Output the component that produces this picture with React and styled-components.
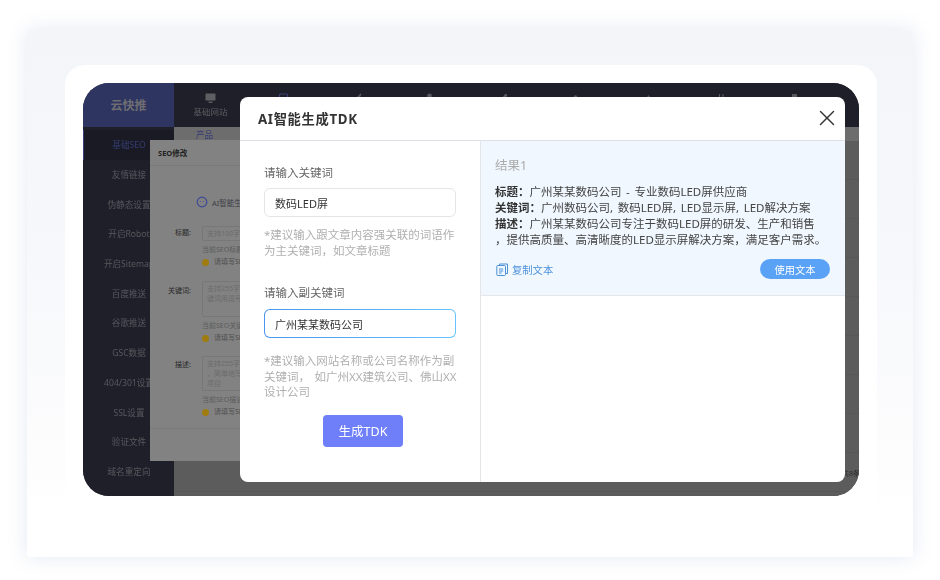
import React from "react";
import styled, { createGlobalStyle } from "styled-components";
import { X } from "lucide-react";

const FONT = `"Noto Sans", "Noto Sans CJK SC", sans-serif`;

const Global = createGlobalStyle`
  html, body { margin: 0; padding: 0; background: #fff; }
  * { box-sizing: border-box; }
  body { font-family: ${FONT}; width: 940px; height: 580px; overflow: hidden; }
`;

const Page = styled.div`
  width: 940px;
  height: 580px;
  padding: 30px 27px 23px;
`;
const OuterCard = styled.div`
  height: 527px;
  padding: 35px 36px 0 38px;
  border-radius: 4px;
  background: linear-gradient(180deg, #f3f5f9 0%, #f7f8fb 45%, #fcfcfd 78%, #fff 92%);
  box-shadow: 0 0 20px rgba(198, 205, 230, 0.45);
`;
const InnerCard = styled.div`
  height: 470px;
  padding: 18px;
  border-radius: 20px;
  background: #fff;
`;
const Screen = styled.div`
  position: relative;
  width: 776px;
  height: 413px;
`;
const Backdrop = styled.div`
  position: relative;
  display: grid;
  grid-template-columns: 91px 1fr;
  grid-template-rows: 44px 1fr;
  width: 100%;
  height: 100%;
  border-radius: 26px;
  overflow: hidden;
  background: #1e1f29;
  filter: blur(0.4px);
`;
const Logo = styled.div`
  display: flex;
  align-items: center;
  justify-content: center;
  background: #2f3561;
  color: #6d6d72;
  font-size: 12px;
  font-weight: 700;
`;
const TopNav = styled.div`
  display: flex;
  background: #1e1f29;
`;
const NavItem = styled.div`
  width: 73px;
  display: flex;
  flex-direction: column;
  align-items: center;
  padding-top: 10px;
  gap: 1px;
  color: #5a5a5f;
  font-size: 8.5px;
  line-height: 13px;
  white-space: nowrap;
`;
const Side = styled.div`
  display: flex;
  flex-direction: column;
  padding-top: 3px;
  background: #1e1f29;
`;
const SideItem = styled.div`
  height: 29.7px;
  display: flex;
  align-items: center;
  justify-content: center;
  white-space: nowrap;
  font-size: 8.6px;
  color: ${(p) => (p.$active ? "#353d74" : "#58585d")};
  background: ${(p) => (p.$active ? "#191a23" : "transparent")};
  border-left: 1px solid ${(p) => (p.$active ? "#39427c" : "transparent")};
`;
const Main = styled.div`
  display: flex;
  flex-direction: column;
  background: #5b5b5b;
`;
const Tabs = styled.div`
  height: 14px;
  padding-left: 22px;
  background: #6d6d6d;
  color: #353d74;
  font-size: 8.6px;
  line-height: 17px;
`;
const Rows = styled.div`
  flex: 1;
  background: repeating-linear-gradient(180deg, #5c5c5c 0 38px, #575757 38px 39px);
`;
const PagerNote = styled.div`
  position: absolute;
  right: -1px;
  bottom: 18px;
  color: #2c2c2c;
  font-size: 7px;
`;
const SeoDialog = styled.div`
  position: absolute;
  left: 67px;
  top: 57px;
  width: 500px;
  height: 321px;
  background: #828282;
  display: flex;
  flex-direction: column;
`;
const SeoHead = styled.div`
  height: 26px;
  padding: 0 8px;
  display: flex;
  align-items: center;
  border-bottom: 1px solid #7a7a7a;
  color: #1f1f1f;
  font-size: 7.5px;
  font-weight: 700;
`;
const SeoBody = styled.div`
  flex: 1;
  padding: 30px 0 0 46px;
`;
const AiLine = styled.div`
  display: flex;
  align-items: center;
  gap: 4px;
  height: 12px;
  margin-bottom: 18px;
  color: #3c3c46;
  font-size: 7.5px;
  white-space: nowrap;
`;
const Field = styled.div`
  display: grid;
  grid-template-columns: 35px 1fr;
  column-gap: 11px;
  align-items: start;
  margin-bottom: ${(p) => p.$gap}px;
  margin-left: -40px;
`;
const FieldLabel = styled.div`
  font-size: 7px;
  line-height: 14px;
  color: #262626;
  text-align: right;
  padding-top: ${(p) => p.$top}px;
`;
const FieldBox = styled.div`
  width: 150px;
  height: ${(p) => p.$h}px;
  padding: 2px 4px;
  border: 1px solid #777;
  border-radius: 2px;
  color: #6c6c6c;
  font-size: 7px;
  line-height: 10px;
  overflow: hidden;
`;
const Current = styled.div`
  margin-top: 3px;
  color: #5b5b5b;
  font-size: 7px;
  line-height: 12px;
  white-space: nowrap;
`;
const Warn = styled.div`
  display: flex;
  align-items: center;
  gap: 5px;
  color: #4e4e4e;
  font-size: 7px;
  line-height: 12px;
  white-space: nowrap;
`;
const Dot = styled.span`
  width: 7px;
  height: 7px;
  border-radius: 50%;
  background: #a07c10;
`;
const SeoFoot = styled.div`
  height: 33px;
  border-top: 1px solid #7a7a7a;
`;

const Dialog = styled.div`
  position: absolute;
  left: 157px;
  top: 14px;
  width: 605px;
  height: 385px;
  display: flex;
  flex-direction: column;
  background: #fff;
  border-radius: 8px;
  overflow: hidden;
`;
const DialogHead = styled.div`
  height: 44px;
  flex: none;
  display: flex;
  align-items: center;
  justify-content: space-between;
  padding: 0 5px 0 18px;
  border-bottom: 1px solid #dcdfe4;
`;
const DialogTitle = styled.div`
  color: #333;
  font-size: 13.3px;
  font-weight: 700;
  letter-spacing: 0.65px;
`;
const DialogBody = styled.div`
  flex: 1;
  display: grid;
  grid-template-columns: 241px 1fr;
  min-height: 0;
`;
const FormCol = styled.div`
  display: flex;
  flex-direction: column;
  padding: 24px 16px 0 24px;
  border-right: 1px solid #e3e5e9;
`;
const Label = styled.div`
  color: #666;
  font-size: 11.5px;
  line-height: 16px;
  margin-bottom: ${(p) => p.$gap}px;
`;
const Input = styled.div`
  width: 192px;
  height: 29px;
  flex: none;
  display: flex;
  align-items: center;
  padding-left: 10px;
  border-radius: 6px;
  color: #333;
  font-size: 11px;
  border: 1px solid ${(p) => (p.$focus ? "transparent" : "#e3e5e9")};
  background: ${(p) =>
    p.$focus
      ? "linear-gradient(#fff, #fff) padding-box, linear-gradient(90deg, #4a95ee, #66c3ff) border-box"
      : "#fff"};
`;
const Hint = styled.div`
  color: #b0b0b0;
  font-size: 11.5px;
  line-height: 15.5px;
  word-spacing: 1.6px;
  margin-top: ${(p) => p.$top}px;
  margin-bottom: ${(p) => p.$gap}px;
`;
const Generate = styled.div`
  width: 80px;
  height: 32px;
  flex: none;
  align-self: center;
  margin-left: -2px;
  display: flex;
  align-items: center;
  justify-content: center;
  border-radius: 4px;
  background: #6e7ff9;
  color: #fff;
  font-size: 12.5px;
`;
const ResultCol = styled.div`
  display: flex;
  flex-direction: column;
`;
const Result = styled.div`
  height: 155px;
  padding: 16px 15px 0 14px;
  background: #f0f7fe;
  border-bottom: 1px solid #e5e7ea;
  display: flex;
  flex-direction: column;
`;
const ResultHead = styled.div`
  color: #aaa;
  font-size: 12.5px;
  line-height: 18px;
  margin-bottom: 9px;
`;
const ResultText = styled.div`
  color: #444;
  font-size: 11.5px;
  line-height: 16px;
  word-spacing: 1.6px;
  white-space: nowrap;
  b { font-weight: 700; color: #333; }
`;
const ResultFoot = styled.div`
  margin-top: 11px;
  display: flex;
  align-items: center;
  justify-content: space-between;
`;
const Copy = styled.div`
  display: flex;
  align-items: center;
  gap: 4px;
  padding-left: 1px;
  color: #4a90d9;
  font-size: 10.3px;
`;
const UseBtn = styled.div`
  width: 70px;
  height: 20px;
  display: flex;
  align-items: center;
  justify-content: center;
  border-radius: 10px;
  background: #5aa2f5;
  color: #fff;
  font-size: 10.3px;
`;
const Close = styled.div`
  display: flex;
  margin-bottom: 2px;
  color: #333;
`;

const Monitor = () => (
  <svg width="11" height="11" viewBox="0 0 11 11">
    <rect x="0.5" y="0.5" width="10" height="7" rx="0.6" fill="#5e5e63" />
    <rect x="3.5" y="8.5" width="4" height="1.4" fill="#5e5e63" />
  </svg>
);
const Peek = ({ kind }) => (
  <svg width="11" height="11" viewBox="0 0 11 11" fill="none" stroke="#3a4272" strokeWidth="1.2">
    {kind === "page" && <rect x="1.5" y="1" width="8" height="9" rx="1" />}
    {kind === "send" && <path d="M10 1 6 5 8 5Z" fill="#56565c" stroke="#56565c" />}
    {kind === "user" && <circle cx="5.5" cy="3" r="2.4" fill="#56565c" stroke="none" />}
    {kind === "tag" && <path d="M5 5 8 1h2v2L7 6Z" fill="#56565c" stroke="none" />}
    {kind === "dot" && <circle cx="5.5" cy="4" r="1.8" fill="#56565c" stroke="none" />}
    {kind === "tip" && <path d="M5.5 2 7.5 5h-4Z" fill="#56565c" stroke="none" />}
    {kind === "bars" && <path d="M3.5 1v4M7 1v4" stroke="#56565c" />}
    {kind === "box" && <rect x="3" y="1" width="5" height="4" fill="#56565c" stroke="none" />}
  </svg>
);
const AiIcon = () => (
  <svg width="12" height="12" viewBox="0 0 12 12" fill="none">
    <circle cx="6" cy="6" r="4.8" stroke="#3c4a96" strokeWidth="1.2" />
    <circle cx="4.4" cy="5.4" r="0.5" fill="#3c4a96" />
    <circle cx="7.6" cy="5.4" r="0.5" fill="#3c4a96" />
  </svg>
);
const CopyIcon = () => (
  <svg width="12" height="13" viewBox="0 0 12 13" fill="none" stroke="#4a90d9" strokeWidth="1">
    <path d="M3.5 2.5V1h8v9.5H9.5" />
    <rect x="0.8" y="2.5" width="8.7" height="10" rx="1" />
    <path d="M3 6h4.2M3 8h4.2M3 10h2.6" />
  </svg>
);

const SIDE = ["基础SEO", "友情链接", "伪静态设置", "开启Robot", "开启Sitemap", "百度推送", "谷歌推送", "GSC数据", "404/301设置", "SSL设置", "验证文件", "域名重定向"];
const PEEKS = ["page", "send", "user", "tag", "dot", "tip", "bars", "box"];

export default function App() {
  return (
    <Page>
      <Global />
      <OuterCard>
        <InnerCard>
          <Screen>
            <Backdrop>
              <Logo>云快推</Logo>
              <TopNav>
                <NavItem><Monitor />基础网站</NavItem>
                {PEEKS.map((k) => (
                  <NavItem key={k}><Peek kind={k} /></NavItem>
                ))}
              </TopNav>
              <Side>
                {SIDE.map((s, i) => (
                  <SideItem key={s} $active={i === 0}>{s}</SideItem>
                ))}
              </Side>
              <Main>
                <Tabs>产品</Tabs>
                <Rows />
              </Main>
              <PagerNote>共8条</PagerNote>
              <SeoDialog>
                <SeoHead>SEO修改</SeoHead>
                <SeoBody>
                  <AiLine><AiIcon />AI智能生成</AiLine>
                  <Field $gap={13}>
                    <FieldLabel $top={0}>标题:</FieldLabel>
                    <div>
                      <FieldBox $h={15}>支持100字，</FieldBox>
                      <Current>当前SEO标题</Current>
                      <Warn><Dot />请填写SEO</Warn>
                    </div>
                  </Field>
                  <Field $gap={12}>
                    <FieldLabel $top={3}>关键词:</FieldLabel>
                    <div>
                      <FieldBox $h={36}>支持255字，<br />键词用逗号</FieldBox>
                      <Current>当前SEO关键</Current>
                      <Warn><Dot />请填写SEO</Warn>
                    </div>
                  </Field>
                  <Field $gap={0}>
                    <FieldLabel $top={2}>描述:</FieldLabel>
                    <div>
                      <FieldBox $h={35}>支持255字，<br />，简单地写<br />项目</FieldBox>
                      <Current>当前SEO描述</Current>
                      <Warn><Dot />请填写SEO</Warn>
                    </div>
                  </Field>
                </SeoBody>
                <SeoFoot />
              </SeoDialog>
            </Backdrop>
            <Dialog>
              <DialogHead>
                <DialogTitle>AI智能生成TDK</DialogTitle>
                <Close><X size={26} strokeWidth={1.3} /></Close>
              </DialogHead>
              <DialogBody>
                <FormCol>
                  <Label $gap={7}>请输入关键词</Label>
                  <Input>数码LED屏</Input>
                  <Hint $top={10} $gap={27}>*建议输入跟文章内容强关联的词语作为主关键词，如文章标题</Hint>
                  <Label $gap={8}>请输入副关键词</Label>
                  <Input $focus>广州某某数码公司</Input>
                  <Hint $top={15} $gap={15}>*建议输入网站名称或公司名称作为副关键词， 如广州XX建筑公司、佛山XX设计公司</Hint>
                  <Generate>生成TDK</Generate>
                </FormCol>
                <ResultCol>
                  <Result>
                    <ResultHead>结果1</ResultHead>
                    <ResultText>
                      <b>标题：</b>广州某某数码公司 - 专业数码LED屏供应商<br />
                      <b>关键词：</b>广州数码公司, 数码LED屏, LED显示屏, LED解决方案<br />
                      <b>描述：</b>广州某某数码公司专注于数码LED屏的研发、生产和销售<br />
                      ，提供高质量、高清晰度的LED显示屏解决方案，满足客户需求。
                    </ResultText>
                    <ResultFoot>
                      <Copy><CopyIcon />复制文本</Copy>
                      <UseBtn>使用文本</UseBtn>
                    </ResultFoot>
                  </Result>
                </ResultCol>
              </DialogBody>
            </Dialog>
          </Screen>
        </InnerCard>
      </OuterCard>
    </Page>
  );
}
